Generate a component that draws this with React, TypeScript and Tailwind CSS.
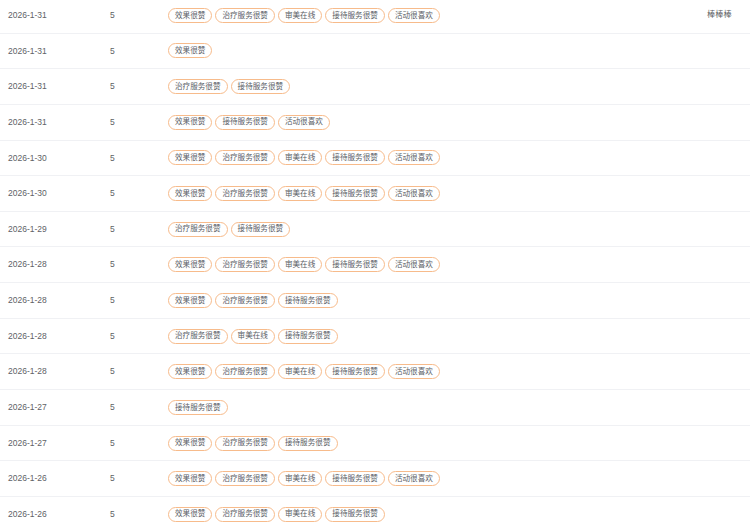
import React from 'react'

const ALL = ["效果很赞", "治疗服务很赞", "审美在线", "接待服务很赞", "活动很喜欢"]

type Row = { date: string; score: string; tags: string[]; comment?: string }

const rows: Row[] = [
  { date: "2026-1-31", score: "5", tags: ALL, comment: "棒棒棒" },
  { date: "2026-1-31", score: "5", tags: ["效果很赞"] },
  { date: "2026-1-31", score: "5", tags: ["治疗服务很赞", "接待服务很赞"] },
  { date: "2026-1-31", score: "5", tags: ["效果很赞", "接待服务很赞", "活动很喜欢"] },
  { date: "2026-1-30", score: "5", tags: ALL },
  { date: "2026-1-30", score: "5", tags: ALL },
  { date: "2026-1-29", score: "5", tags: ["治疗服务很赞", "接待服务很赞"] },
  { date: "2026-1-28", score: "5", tags: ALL },
  { date: "2026-1-28", score: "5", tags: ["效果很赞", "治疗服务很赞", "接待服务很赞"] },
  { date: "2026-1-28", score: "5", tags: ["治疗服务很赞", "审美在线", "接待服务很赞"] },
  { date: "2026-1-28", score: "5", tags: ALL },
  { date: "2026-1-27", score: "5", tags: ["接待服务很赞"] },
  { date: "2026-1-27", score: "5", tags: ["效果很赞", "治疗服务很赞", "接待服务很赞"] },
  { date: "2026-1-26", score: "5", tags: ALL },
  { date: "2026-1-26", score: "5", tags: ["效果很赞", "治疗服务很赞", "审美在线", "接待服务很赞"] },
]

function Tag({ label }: { label: string }) {
  return (
    <span className="inline-flex items-center h-[15px] px-[6px] rounded-full border border-[#f7bb8b] text-[7.6px] leading-none text-[#5a5e66]">
      {label}
    </span>
  )
}

export default function App() {
  return (
    <div className="w-[750px] h-[522px] overflow-hidden bg-white font-['Liberation_Sans','Noto_Sans_CJK_SC',sans-serif] text-[#606266]">
      <div className="-mt-[2px]">
        {rows.map((row, i) => (
          <div
            key={i}
            className="grid grid-cols-[110px_58px_539px_1fr] items-center h-[35.65px] border-b border-[#f0f1f4]"
          >
            <div className="pl-[8px] text-[8.5px]">{row.date}</div>
            <div className="text-[8.5px]">{row.score}</div>
            <div className="flex items-center gap-[3px]">
              {row.tags.map((t) => (
                <Tag key={t} label={t} />
              ))}
            </div>
            <div className="text-[8.2px]">{row.comment}</div>
          </div>
        ))}
      </div>
    </div>
  )
}
